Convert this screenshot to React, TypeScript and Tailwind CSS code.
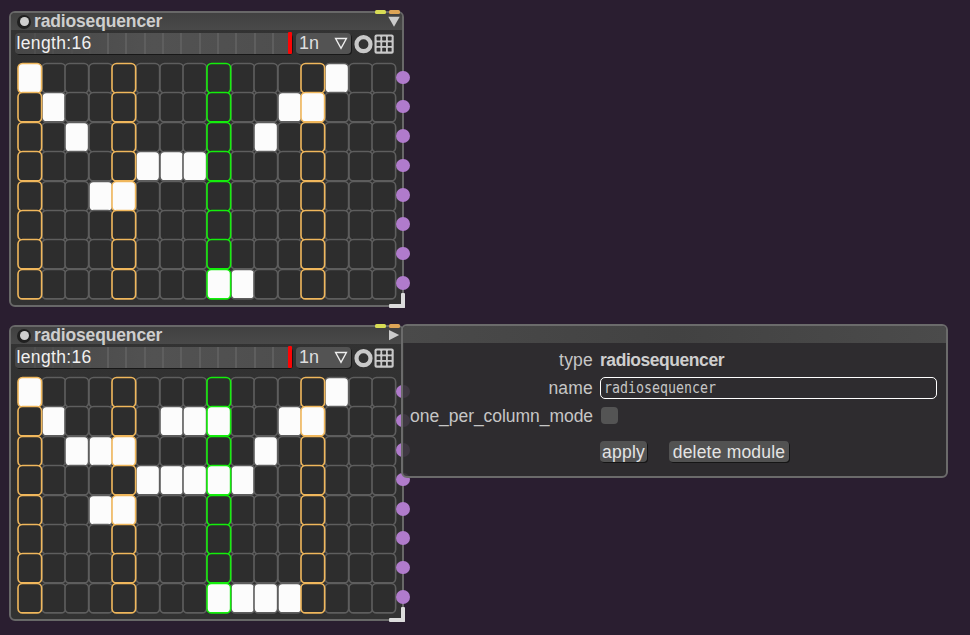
const FONT = "font-['Liberation_Sans',Arial,sans-serif]";

const FIRST_PATTERN = [[0, 13], [1, 11, 12], [2, 10], [5, 6, 7], [3, 4], [], [], [8, 9]];
const SECOND_PATTERN = [[0, 13], [1, 6, 7, 8, 11, 12], [2, 3, 4, 10], [5, 6, 7, 8, 9], [3, 4], [], [], [8, 9, 10, 11]];
const COLUMNS = Array.from({ length: 16 }, (_, i) => i);
const TICKS = Array.from({ length: 14 }, (_, i) => i);

function cellOutline(col: number) {
  if (col === 8) return "stroke-[#14ee0c] z-20";
  if (col % 4 === 0) return "stroke-[#f0b75c] z-10";
  return "stroke-[#5e5e5e]";
}

function StepGrid({ pattern }: { pattern: number[][] }) {
  return (
    <div className="ml-[7px] mt-[9px] grid h-[235.2px] w-[377.8px] grid-cols-16 grid-rows-8">
      {pattern.map((row, r) =>
        COLUMNS.map((c) => (
          <div key={`${r}-${c}`} className={`relative ${cellOutline(c)}`}>
            <svg className="block h-full w-full overflow-visible" strokeWidth="1.6">
              <rect
                x="0"
                y="0.5"
                width="100%"
                height="100%"
                rx="4.5"
                className={row.includes(c) ? "fill-[#fcfcfc]" : "fill-[#2d2d2d]"}
              />
            </svg>
          </div>
        )),
      )}
    </div>
  );
}

function LengthSlider() {
  return (
    <div className="relative flex h-[21px] w-[277px] items-center rounded-[4px] bg-linear-to-r from-[#474747] via-[#525252] to-[#4e4e4e] shadow-[1px_1px_0_#181818]">
      <div className="absolute inset-y-0 left-[19px] flex gap-[16.3px]">
        {TICKS.map((t) => (
          <div key={t} className={`w-[2px] ${t < 4 ? "bg-[#4f4f4f]" : "bg-[#5e5e5e]"}`} />
        ))}
      </div>
      <span className="relative pl-[1.5px] text-[17.5px] leading-[21px] tracking-[0.35px] text-[#f0f0f0]">length:16</span>
      <div className="absolute -top-px right-0 h-[22px] w-[4px] rounded-[1px] bg-[#fb0505]" />
    </div>
  );
}

function SequencerModule({ pattern, open }: { pattern: number[][]; open?: boolean }) {
  return (
    <section className="relative h-[296px] w-[395px] rounded-[6px] border-2 border-[#686868] bg-linear-to-b from-[#333333] via-[#2e2e2e] to-[#323232]">
      <header className="flex h-[17px] items-center rounded-t-[4px] bg-linear-to-b from-[#414141] to-[#494949] pl-[6px]">
        <span className="flex size-[14px] items-center justify-center rounded-full bg-[#202020]">
          <span className="size-[9px] rounded-full bg-[#cfcfcf]" />
        </span>
        <h2 className="ml-[3px] text-[17.5px] leading-[17px] font-bold tracking-[-0.15px] text-[#cecece]">radiosequencer</h2>
        <svg className="mr-[2px] ml-auto" width="12" height="12" viewBox="0 0 12 12">
          <path d={open ? "M1 0L11.2 5L1 10.3Z" : "M.3 .8H11.7L6 10.7Z"} fill="#cbcbcb" />
        </svg>
      </header>
      <div className="mt-[3px] flex h-[21px] items-center pl-[4px]">
        <LengthSlider />
        <div className="ml-[4px] flex h-[21px] w-[55px] items-center rounded-[4px] bg-[#535353] pl-[3px] shadow-[1px_1px_0_#181818]">
          <span className="text-[18px] leading-[21px] text-[#dedede]">1n</span>
          <svg className="mr-[3px] ml-auto" width="14" height="13" viewBox="0 0 14 13" fill="none" stroke="#eee" strokeWidth="1.4">
            <path d="M1.6 1.5H12.4L7 11.4Z" />
          </svg>
        </div>
        <svg className="ml-[3px]" width="19" height="20" viewBox="0 0 19 20" fill="none" stroke="#c9c9c9" strokeWidth="4.2">
          <circle cx="9.5" cy="10.2" r="7" />
        </svg>
        <svg className="ml-px" width="20" height="20" viewBox="0 0 20 20">
          <rect x="0.5" y="0.5" width="19.2" height="19.2" rx="2" fill="#c9c9c9" />
          {[2.6, 8.2, 13.8].flatMap((x) =>
            [2.6, 8.2, 13.8].map((y) => <rect key={`${x}-${y}`} x={x} y={y} width="3.8" height="3.8" rx="0.6" fill="#303030" />),
          )}
        </svg>
      </div>
      <StepGrid pattern={pattern} />
      <div className="absolute -top-[3px] right-[2px] flex gap-[3px]">
        <span className="h-[4px] w-[11px] rounded-[1.5px] bg-[#d8dc55]" />
        <span className="h-[4px] w-[11px] rounded-[1.5px] bg-[#dda456]" />
      </div>
      <div className="absolute top-[57.5px] -right-[7.5px] flex flex-col gap-[15.9px]">
        {pattern.map((_, i) => (
          <span key={i} className="size-[13.5px] rounded-full bg-[#b07bcc]" />
        ))}
      </div>
      <div className="absolute -right-[3px] -bottom-[3px] z-10 h-[15px] w-[16px]">
        <span className="absolute right-0 bottom-0 h-[4px] w-full rounded-[1px] bg-[#dcdcdc]" />
        <span className="absolute right-0 bottom-0 h-full w-[4px] rounded-[1px] bg-[#dcdcdc]" />
      </div>
    </section>
  );
}

function ActionButton({ label, width }: { label: string; width: string }) {
  return (
    <button className={`h-[21px] ${width} rounded-[4px] bg-[#525252] text-center text-[17.5px] leading-[20px] tracking-[0.2px] whitespace-nowrap text-[#e4e4e4] shadow-[1px_1px_0_#151515]`}>
      {label}
    </button>
  );
}

function SettingsPopup() {
  return (
    <aside className="absolute top-[324px] left-[401px] z-30 h-[154px] w-[547px] rounded-[6px] border-2 border-[#6b6b6b] bg-[#2f2f2f]/88 text-[17.5px] text-[#c6c6c6]">
      <div className="h-[17px] rounded-t-[4px] bg-linear-to-r from-[#4a4a4a] via-[#424242] to-[#4b4b4b]" />
      <div className="mt-[4px] grid grid-cols-[190px_1fr] gap-x-[7px]">
        <label className="flex h-[27px] items-center justify-end tracking-[0.2px]">type</label>
        <strong className="flex h-[27px] items-center tracking-[-0.45px] text-[#cecece]">radiosequencer</strong>
        <label className="flex h-[29px] items-center justify-end tracking-[0.2px]">name</label>
        <div className="mt-[3px] flex h-[22px] w-[337px] items-center rounded-[5px] border-[1.5px] border-white pl-[3px]">
          <span className="origin-left scale-x-[0.83] font-['DejaVu_Sans_Mono',monospace] text-[16px] leading-[20px]">radiosequencer</span>
        </div>
        <label className="flex h-[26px] items-center justify-end tracking-[-0.05px]">one_per_column_mode</label>
        <div className="mt-[4px] ml-px size-[17px] rounded-[4px] bg-[#545454]" />
      </div>
      <div className="mt-[12px] ml-[197px] flex gap-[22px]">
        <ActionButton label="apply" width="w-[47px]" />
        <ActionButton label="delete module" width="w-[120px]" />
      </div>
    </aside>
  );
}

export default function App() {
  return (
    <main className={`relative flex h-[635px] w-[970px] flex-col gap-[18px] overflow-hidden bg-[#2a1e30] pt-[11px] pl-[9px] ${FONT}`}>
      <SequencerModule pattern={FIRST_PATTERN} />
      <SequencerModule pattern={SECOND_PATTERN} open />
      <SettingsPopup />
    </main>
  );
}
